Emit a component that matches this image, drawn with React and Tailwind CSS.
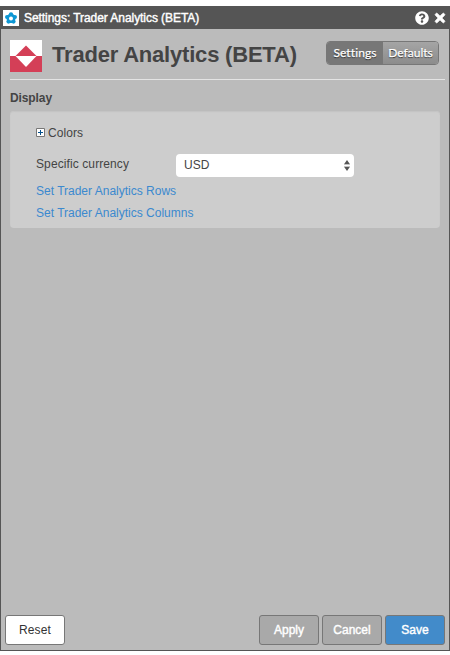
import { FaQuestionCircle, FaTimes } from "react-icons/fa";

function FlowerIcon() {
  return (
    <svg viewBox="0 0 16 16" className="h-4 w-4 shrink-0 bg-white">
      <g fill="#0e97d4">
        <circle cx="8" cy="4.3" r="2.1" />
        <circle cx="11.9" cy="7" r="2.1" />
        <circle cx="10.5" cy="11.6" r="2.1" />
        <circle cx="5.5" cy="11.6" r="2.1" />
        <circle cx="4.1" cy="7" r="2.1" />
        <path d="M8 2.8 13.2 6.6 11.2 12.9H4.8L2.8 6.6z" />
      </g>
      <circle cx="8" cy="8.4" r="2" fill="#fff" />
    </svg>
  );
}

function Logo() {
  return (
    <svg viewBox="0 0 32 32" className="h-8 w-8 shrink-0">
      <path fill="#fff" d="M0 0h32v16H0z" />
      <path fill="#d43f57" d="M0 16h32v16H0z" />
      <path fill="#d43f57" d="M16 5.5 26.5 16h-21z" />
      <path fill="#fff" d="M5.5 16h21L16 27z" />
    </svg>
  );
}

function TitleBar() {
  return (
    <header className="flex h-[23px] items-center bg-[#555] pr-[4px] pl-[3px] text-white">
      <FlowerIcon />
      <span className="ml-[5px] text-[12px] tracking-[-0.06px] [-webkit-text-stroke:0.4px_#fff]">
        Settings: Trader Analytics (BETA)
      </span>
      <FaQuestionCircle className="mr-px ml-auto h-[14px] w-[14px]" />
      <FaTimes className="ml-[4px] h-[14px] w-[12px] stroke-white" strokeWidth="30" />
    </header>
  );
}

const actions = "flex h-[30px] w-[60px] items-center justify-center rounded-[3px] border border-[#777] text-[12px]";

export default function App() {
  return (
    <div className="h-[655px] w-[450px] bg-white pt-[6px] font-['Liberation_Sans',Arial,sans-serif] text-[#444]">
      <div className="flex h-[645px] flex-col bg-[#555]">
        <TitleBar />
        <main className="mx-px mb-px flex grow flex-col bg-[#bbb]">
          <div className="mr-1 ml-[9px] flex h-[51px] items-start border-b border-[#e4e4e4] pt-[11px]">
            <Logo />
            <h1 className="ml-[10px] text-[22px] leading-[29px] font-bold tracking-[-0.2px] whitespace-nowrap">
              Trader Analytics (BETA)
            </h1>
            <div className="mt-px mr-[6px] ml-auto flex h-6 w-[113px] shrink-0 overflow-hidden rounded-[4px] border border-[#777] font-[Lato,sans-serif] text-[12px] text-white [-webkit-text-stroke:0.25px_#fff] [text-shadow:0_1px_1px_#222]">
              <span className="flex w-14 items-center justify-center bg-[#777] tracking-[0.1px]">Settings</span>
              <span className="flex grow items-center justify-center bg-linear-to-b from-[#a5a5a5] to-[#8c8c8c]">Defaults</span>
            </div>
          </div>

          <h2 className="mt-[10px] ml-[9px] text-[12px] leading-[16px] font-bold tracking-[-0.1px]">Display</h2>
          <section className="mt-[5px] mr-[9px] ml-[9px] h-[117px] rounded-[4px] bg-[#cdcdcd] pl-[26px] text-[12px] shadow-[inset_0_1px_1px_#c4c4c4]">
            <div className="flex h-[43px] items-center">
              <svg viewBox="0 0 9 9" className="h-[9px] w-[9px]">
                <path d="M.5.5h8v8h-8z" fill="#fff" stroke="#777" />
                <path d="M2 4.5h5M4.5 2v5" stroke="#04508c" />
              </svg>
              <span className="ml-[3px] tracking-[0.05px]">Colors</span>
            </div>
            <div className="flex h-[23px]">
              <label className="w-[140px] leading-[20px] tracking-[0.1px]">Specific currency</label>
              <div className="flex h-[23px] w-[178px] items-center rounded-[4px] bg-white pr-1 pl-2">
                <span className="-mt-px">USD</span>
                <svg viewBox="0 0 6 11" className="ml-auto h-[11px] w-[6px]">
                  <path d="M.2 4 3 0l2.8 4zM.2 7h5.6L3 11z" fill="#555" />
                  <path d="M0 4.5h6M0 6.5h6" stroke="#aaa" strokeWidth=".7" />
                </svg>
              </div>
            </div>
            <div className="pt-[3px] leading-[22px] text-[#3b89cf]">
              <a className="block">Set Trader Analytics Rows</a>
              <a className="block">Set Trader Analytics Columns</a>
            </div>
          </section>

          <footer className="mt-auto mr-1 mb-[5px] ml-1 flex gap-[3px]">
            <button className={`${actions} mr-auto bg-white tracking-[0.1px] text-[#333]`}>Reset</button>
            <button className={`${actions} bg-[#a9a9a9] text-white [-webkit-text-stroke:0.4px_#fff]`}>Apply</button>
            <button className={`${actions} bg-[#a9a9a9] text-white [-webkit-text-stroke:0.4px_#fff]`}>Cancel</button>
            <button className={`${actions} bg-[#428bca] text-white [-webkit-text-stroke:0.4px_#fff]`}>Save</button>
          </footer>
        </main>
      </div>
    </div>
  );
}
